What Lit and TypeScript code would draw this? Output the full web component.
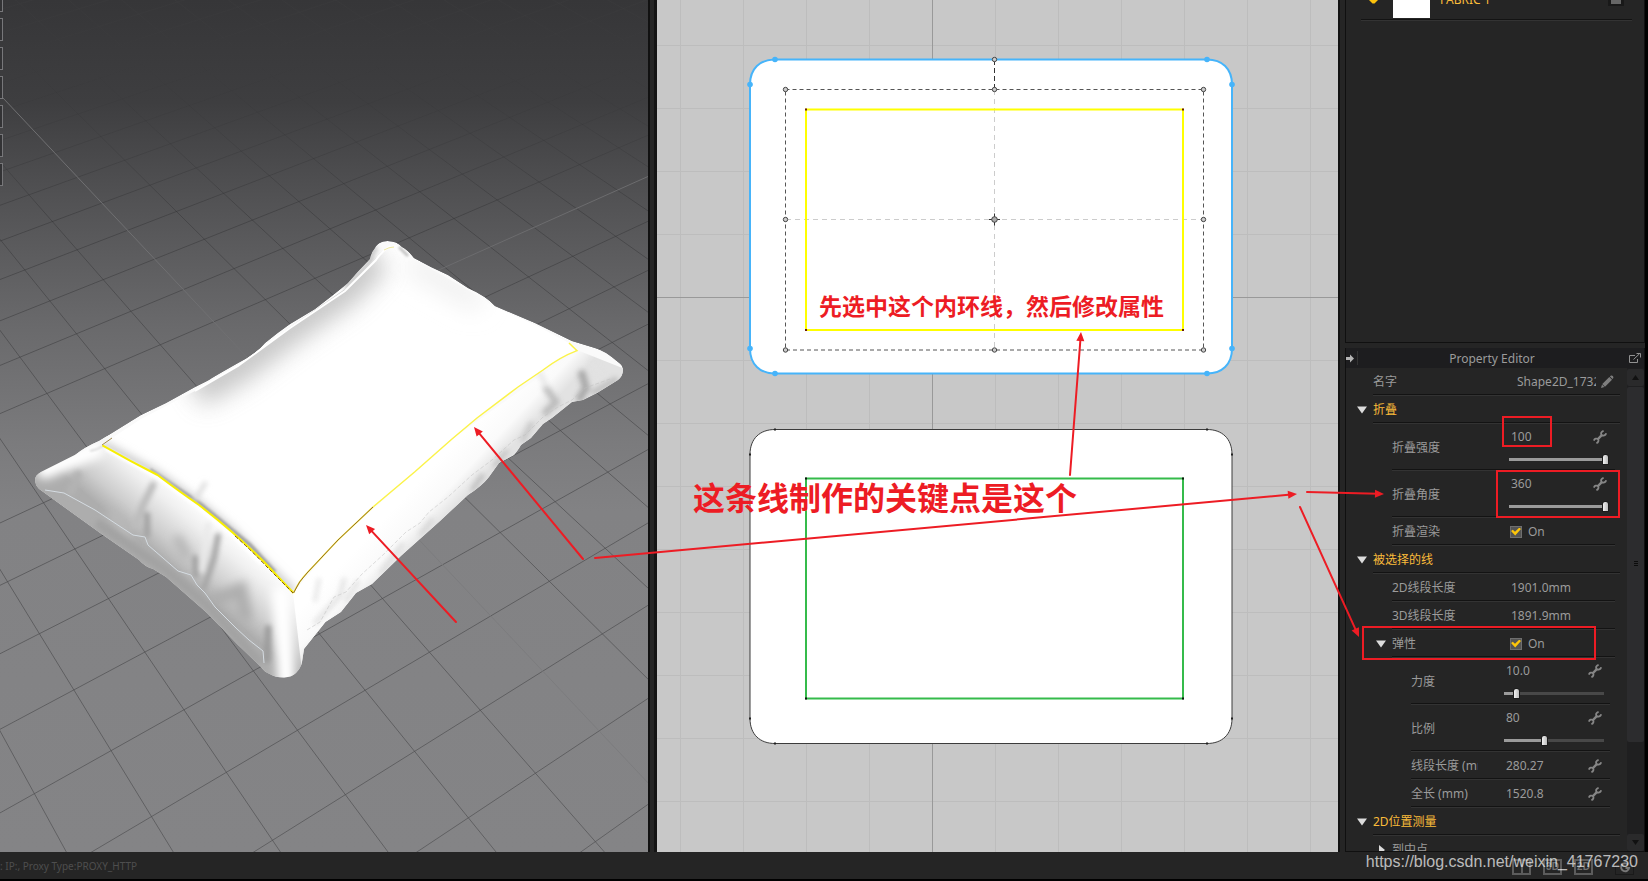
import { LitElement, html, svg, css, nothing, TemplateResult } from "lit";
import { customElement, property } from "lit/decorators.js";
import { classMap } from "lit/directives/class-map.js";

/* ---------- 3D viewport ---------- */

type Point = [number, number];

/** Projects a floor tile corner (i, j) onto the viewport. */
const project = (i: number, j: number): Point => {
  const w = 1 + 0.02588 * i - 0.0417 * j;
  return [
    (226.4 + 78.8 * i + 34.76 * j) / w,
    (772.3 - 23.15 * i + 32.95 * j) / w,
  ];
};

const floorPath = (a: Point, b: Point) =>
  `M${a[0].toFixed(1)} ${a[1].toFixed(1)}L${b[0].toFixed(1)} ${b[1].toFixed(1)}`;

const range = (from: number, to: number) =>
  Array.from({ length: to - from + 1 }, (_, k) => from + k);

const AXIS_I = 4;
const AXIS_J = -6;

const floorLines = [
  ...range(-12, 44)
    .filter((i) => i !== AXIS_I)
    .map((i) => floorPath(project(i, -34), project(i, 6))),
  ...range(-34, 6)
    .filter((j) => j !== AXIS_J)
    .map((j) => floorPath(project(-12, j), project(50, j))),
].join("");

const OUTLINE =
  "M387.6 241C381 241 377 244 375 248Q371 253 370 259Q358 271 348 283Q332 296 315 309L290 324Q277 333 265 343Q256 354 238 363Q215 376 207 381L195 387L166 403L141 415L99 441Q85 447 75 455L41 472Q35 475 35 480Q35 485 39 489L75 515L100 533L139 560Q145 567 153 569L166 577L207 613L238 645L261 667Q264 672 269.5 674Q275 677.5 284 677.5Q292 677 296 673Q301 668 302 662L304 649L325.500 622L341 612L356 593L372 584L402 555L439 522L468 495Q482 486 489 477L499 463L514 455Q519 449 521 445L531 438L543 424L552 418L572 402L583 400L597 393L618 380Q623 376 623 370Q623 365 618 362Q604 350 595 348L572 341L535 323L495 306Q486 296 468 288L448 275L431 267L414 258Q408 250 402 247Q397 241 387.600 241Z";

const TOP_FACE =
  "M390 246Q383 249 377 256L345 289L290 327L265 346L238 366L195 391L141 419L112 438L102.400 445.300Q130 461 157.500 475Q180 492 199 505Q217 519 232 532Q250 548 265 563L293.500 593Q299 581 307 573L338 540L373 507L414.600 472L452 439L477 418L518 387L543 370Q560 357 577 350.600L569 343L535 325L495 307L468 290L414 259Q404 247 396 245Z";

const SEAM_LEFT =
  "M102.400 445.300Q130 461 157.500 475Q180 492 199 505Q217 519 232 532Q250 548 265 563L293.500 593";
const SEAM_RIGHT =
  "M293.500 593Q299 581 307 573L338 540L373 507L414.600 472L452 439L477 418L518 387L543 370Q560 357 577 350.600L569 343";

@customElement("scene-view")
export class SceneView extends LitElement {
  static styles = css`
    :host { display: block; position: relative; overflow: hidden; background: #828284; }
    svg { display: block; width: 100%; height: 100%; }
    .tools { position: absolute; left: 0; top: 0; display: flex; flex-direction: column; gap: 6px; }
    .tool { box-sizing: border-box; width: 3px; height: 23px; padding: 0; border: 1px solid #77777a; border-left: 0; background: #333335; }
    .tool:first-child { height: 12px; border-top: 0; }
  `;

  render() {
    return html`
      <svg viewBox="0 0 648 852" preserveAspectRatio="xMinYMin slice" role="img" aria-label="3D pillow">
        <defs>
          <linearGradient id="sky" x1="0" y1="0" x2="0" y2="1">
            <stop offset="0" stop-color="#363638" />
            <stop offset=".12" stop-color="#3e3e40" />
            <stop offset=".24" stop-color="#535355" />
            <stop offset=".38" stop-color="#69696b" />
            <stop offset=".52" stop-color="#7b7b7d" />
            <stop offset=".6" stop-color="#828284" />
            <stop offset="1" stop-color="#848486" />
          </linearGradient>
          <linearGradient id="fade" gradientUnits="userSpaceOnUse" x1="0" y1="0" x2="0" y2="852">
            <stop offset="0" stop-color="#505050" stop-opacity=".1" />
            <stop offset=".1" stop-color="#303032" stop-opacity=".1" />
            <stop offset=".25" stop-color="#303032" stop-opacity=".45" />
            <stop offset=".5" stop-color="#48484a" stop-opacity=".66" />
            <stop offset="1" stop-color="#505052" stop-opacity=".7" />
          </linearGradient>
          <linearGradient id="left" gradientUnits="userSpaceOnUse" x1="199" y1="508" x2="158" y2="556">
            <stop offset="0" stop-color="#fcfcfc" />
            <stop offset=".25" stop-color="#efefef" />
            <stop offset=".7" stop-color="#cdcdcd" />
            <stop offset="1" stop-color="#adadad" />
          </linearGradient>
          <linearGradient id="right" gradientUnits="userSpaceOnUse" x1="430" y1="470" x2="462" y2="500">
            <stop offset="0" stop-color="#fff" />
            <stop offset=".6" stop-color="#fafafa" />
            <stop offset="1" stop-color="#e2e2e2" />
          </linearGradient>
          <filter id="b1" filterUnits="userSpaceOnUse" x="0" y="200" width="648" height="520"><feGaussianBlur stdDeviation="1.300" /></filter>
          <filter id="b2" filterUnits="userSpaceOnUse" x="0" y="200" width="648" height="520"><feGaussianBlur stdDeviation="2.500" /></filter>
          <filter id="b5" filterUnits="userSpaceOnUse" x="0" y="200" width="648" height="520"><feGaussianBlur stdDeviation="5" /></filter>
          <filter id="b12" filterUnits="userSpaceOnUse" x="0" y="200" width="648" height="520"><feGaussianBlur stdDeviation="12" /></filter>
          <clipPath id="body"><path d=${OUTLINE} /></clipPath>
          <clipPath id="face"><path d=${TOP_FACE} /></clipPath>
        </defs>

        <rect width="648" height="852" fill="url(#sky)" />
        <path d=${floorLines} fill="none" stroke="url(#fade)" />
        <path d=${floorPath(project(AXIS_I, -16), project(AXIS_I, -6))} stroke="#707072" />
        <path d=${floorPath(project(AXIS_I, -6), project(AXIS_I, 6))} stroke="#7c7c7e" />
        <path d=${floorPath(project(4, AXIS_J), project(50, AXIS_J))} stroke="#6c6c6e" />

        <g clip-path="url(#body)">
          <path d=${OUTLINE} fill="#fafafa" />
          <path d="M110 435L80 445L30 470L40 500L150 580L255 680L310 680L293 593L232 532L157 475Z" fill="url(#left)" />
          <path d="M293 593L303 680L330 625L460 510L560 420L640 375L577 350L452 439L338 540Z" fill="url(#right)" />
          <g fill="none" stroke-linecap="round">
            <g filter="url(#b5)">
              <path d="M45 470L95 450" stroke="#fff" stroke-width="18" />
              <path d="M245 615L240 590L215 600" stroke="#aeaeae" stroke-width="14" />
              <path d="M112 515L128 535" stroke="#bbb" stroke-width="10" />
              <path d="M178 540L186 555" stroke="#b5b5b5" stroke-width="10" />
              <path d="M281 595L284 640L287 690" stroke="#fff" stroke-width="18" />
            </g>
            <g filter="url(#b2)">
              <path d="M78 475L71 492" stroke="#b3b3b3" stroke-width="8" />
              <path d="M153 485L143 505L135 525" stroke="#bcbcbc" stroke-width="7" />
              <path d="M147 515L147 535" stroke="#a2a2a2" stroke-width="6" />
              <path d="M218 536L214 558L204 588" stroke="#a6a6a6" stroke-width="6" />
              <path d="M208 525L202 570" stroke="#eaeaea" stroke-width="6" />
              <path d="M195 558L196 575" stroke="#a0a0a0" stroke-width="6" />
              <path d="M268 628L267 660" stroke="#999" stroke-width="6" />
              <path d="M100 525L139 552L166 570L207 605L238 638L257 660" stroke="#a3a3a3" stroke-width="10" />
            </g>
            <g filter="url(#b2)" opacity=".75">
              <path d="M315 600L319 580" stroke="#ddd" stroke-width="4" />
              <path d="M316 622L340 596L344 580" stroke="#ddd" stroke-width="5" />
              <path d="M346 600L358 582" stroke="#d6d6d6" stroke-width="4" />
              <path d="M382 572L402 545" stroke="#d8d8d8" stroke-width="5" />
              <path d="M421 534L432 520" stroke="#cacaca" stroke-width="4" />
              <path d="M473 489L482 476" stroke="#b6b6b6" stroke-width="5" />
              <path d="M495 465L506 452" stroke="#bbb" stroke-width="5" />
              <path d="M523 440L531 424" stroke="#bdbdbd" stroke-width="5" />
              <path d="M546 412L556 402L546 388" stroke="#b0b0b0" stroke-width="7" />
              <path d="M580 398L586 388L582 374" stroke="#9a9a9a" stroke-width="8" />
              <path d="M594 392L615 380" stroke="#b4b4b4" stroke-width="6" />
              <path d="M546 385L540 374" stroke="#e2e2e2" stroke-width="5" />
              <path d="M600 374L592 362" stroke="#e2e2e2" stroke-width="5" />
            </g>
          </g>
          <path d="M376 247Q369 254 371 262L345 288" fill="none" stroke="#c8c8c8" stroke-width="7" filter="url(#b2)" />
          <path d=${TOP_FACE} fill="#fff" />
          <g clip-path="url(#face)" fill="none">
            <path d="M376 256L345 289L290 327L238 366L195 391" stroke="#a2a2a2" stroke-width="34" filter="url(#b12)" opacity=".62" />
            <path d="M410 262L480 302" stroke="#eee" stroke-width="20" filter="url(#b12)" />
            <path d="M102 445L157 475L199 505L232 532L293 593" stroke="#c0c0c0" stroke-width="8" filter="url(#b5)" />
            <path d="M150 470L199 503L250 545L275 572" stroke="#8c8c8c" stroke-width="4" filter="url(#b1)" opacity=".7" />
            <path d="M195 500L206 482" stroke="#e0e0e0" stroke-width="5" filter="url(#b2)" />
          </g>
          <g fill="none">
            <path d="M106 449L157 477L199 508L232 535L262 564" stroke="#fff" stroke-width="4" filter="url(#b1)" />
            <path d="M390 246Q381 252 376 260L345 291L290 328L238 366L195 391" stroke="#fff" stroke-width="2" />
            <path d="M399 247L408 256" stroke="#c4c4c4" stroke-width="3" filter="url(#b1)" />
            <path d="M90 451Q97 450 103 446" stroke="#bbb" filter="url(#b1)" />
          </g>
        </g>

        <path d="M45 490L64 493L95 510L133 535L145 537L148 545L178 571L191 575L197 585L205 593L215 607L236 628L249 640L263 651L264 663" fill="none" stroke="#d5dce2" />
        <path d="M307 630L320 622L334 597L346 592L362 574L384 554L406 532L420 523L429 512L448 497L472 475L492 460L514 440L525 435L543 417L558 407L572 400L585 388L610 379" fill="none" stroke="#bdbdbd" opacity=".5" stroke-dasharray="4 2" />
        <path d=${SEAM_LEFT} fill="none" stroke="#f7ee00" stroke-width="2" />
        <path d="M235 536Q252 551 266 566L293 593" fill="none" stroke="#7d5518" stroke-dasharray="4 2" />
        <path d="M102 445L112 438" fill="none" stroke="#a08a50" />
        <path d=${SEAM_RIGHT} fill="none" stroke="#fbf34a" stroke-width="1.500" />
        <path d="M293.500 593Q299 581 307 573L338 540L373 507" fill="none" stroke="#93692c" />
        <path d="M384 250Q389 247 394 247" fill="none" stroke="#efe9a0" />
      </svg>
      <div class="tools">
        ${range(1, 7).map((n) => html`<button class="tool" type="button" aria-label="Tool ${n}"></button>`)}
      </div>
    `;
  }
}

/* ---------- 2D pattern window ---------- */

const roundedPiece = (top: number, bottom: number) =>
  `M118 ${top}H550C565 ${top} 575 ${top + 9} 575 ${top + 25}V${bottom - 25}C575 ${bottom - 9} 565 ${bottom} 550 ${bottom}H118C103 ${bottom} 93 ${bottom - 9} 93 ${bottom - 25}V${top + 25}C93 ${top + 9} 103 ${top} 118 ${top}Z`;

const pieceNodes = (top: number, bottom: number): Point[] => [
  [118, top], [550, top], [575, top + 25], [575, bottom - 25],
  [550, bottom], [118, bottom], [93, bottom - 25], [93, top + 25],
];

@customElement("pattern-view")
export class PatternView extends LitElement {
  static styles = css`
    :host { display: block; overflow: hidden; background: #c8c8c8; }
    svg { display: block; width: 100%; height: 100%; }
  `;

  private dots(points: Point[], size: number, color: string) {
    return points.map(([x, y]) => svg`<rect x=${x - size / 2} y=${y - size / 2} width=${size} height=${size} fill=${color} />`);
  }

  render() {
    const columns = range(-4, 6).map((n) => 275.5 + n * 63);
    const rows = range(-4, 8).map((n) => 297.5 + n * 63);
    const handles: Point[] = [
      [337.5, 59.5], [128.5, 89.5], [337.5, 89.5], [546.5, 89.5], [128.5, 219.5],
      [546.5, 219.5], [128.5, 350], [337.5, 350], [546.5, 350],
    ];
    return html`
      <svg viewBox="0 0 681 852" preserveAspectRatio="xMinYMin slice" role="img" aria-label="2D pattern">
        <path d=${columns.map((x) => `M${x} 0V852`).join("") + rows.map((y) => `M0 ${y}H681`).join("")} stroke="#bdbdbd" />
        <path d="M275.500 0V852M0 297.500H681" stroke="#999" />

        <path d=${roundedPiece(59.5, 373.5)} fill="#fff" stroke="#46b4fa" stroke-width="2" />
        ${pieceNodes(59.5, 373.5).map(([x, y]) => svg`<circle cx=${x} cy=${y} r="2.800" fill="#46b4fa" />`)}
        <path d="M129 219.500H546M337.500 90V350" stroke="#ccc" stroke-dasharray="5 4" />
        <rect x="149" y="109.500" width="377" height="220.500" fill="none" stroke="#ff0" stroke-width="2" />
        <rect x="128.500" y="89.500" width="418" height="260.500" fill="none" stroke="#555" stroke-dasharray="4 3" />
        <path d="M337.500 60V90" stroke="#333" stroke-dasharray="5 3" />
        ${this.dots([[149, 109.5], [526, 109.5], [149, 330], [526, 330]], 2, "#6b1c10")}
        ${handles.map(([x, y]) => svg`<circle cx=${x} cy=${y} r="2.200" fill="#ccc" stroke="#444" />`)}
        <path d="M337.500 213.500V225.500M332 219.500H343" stroke="#333" />
        <circle cx="337.500" cy="219.500" r="2.800" fill="#aaa" stroke="#444" />

        <path d=${roundedPiece(429.5, 743.5)} fill="#fff" stroke="#3c3c3c" />
        ${this.dots(pieceNodes(429.5, 743.5), 2, "#222")}
        <rect x="149" y="478.500" width="377" height="220" fill="none" stroke="#35bb4b" stroke-width="2" />
        ${this.dots([[149, 478.5], [526, 478.5], [149, 698.5], [526, 698.5]], 2, "#111")}
      </svg>
    `;
  }
}

/* ---------- Property editor ---------- */

interface Row {
  id: string;
  label: string;
  level: 1 | 2 | 3;
  group?: boolean;
  open?: boolean;
  text?: string;
  field?: string;
  check?: boolean;
  slider?: { value: number; max: number };
  tool?: "wrench" | "pencil";
}

const ROWS: Row[] = [
  { id: "name", label: "名字", level: 1, field: "Shape2D_1732", tool: "pencil" },
  { id: "fold", label: "折叠", level: 1, group: true, open: true },
  { id: "strength", label: "折叠强度", level: 2, field: "100", slider: { value: 100, max: 100 }, tool: "wrench" },
  { id: "angle", label: "折叠角度", level: 2, field: "360", slider: { value: 360, max: 360 }, tool: "wrench" },
  { id: "render", label: "折叠渲染", level: 2, check: true },
  { id: "selected", label: "被选择的线", level: 1, group: true, open: true },
  { id: "len2d", label: "2D线段长度", level: 2, text: "1901.0mm" },
  { id: "len3d", label: "3D线段长度", level: 2, text: "1891.9mm" },
  { id: "elastic", label: "弹性", level: 2, open: true, check: true },
  { id: "force", label: "力度", level: 3, field: "10.0", slider: { value: 10, max: 100 }, tool: "wrench" },
  { id: "ratio", label: "比例", level: 3, field: "80", slider: { value: 80, max: 200 }, tool: "wrench" },
  { id: "segment", label: "线段长度 (mm)", level: 3, field: "280.27", tool: "wrench" },
  { id: "total", label: "全长 (mm)", level: 3, field: "1520.8", tool: "wrench" },
  { id: "measure", label: "2D位置测量", level: 1, group: true, open: true },
  { id: "midpoint", label: "到中点", level: 2, open: false },
];

const ICONS: Record<string, TemplateResult> = {
  wrench: html`<svg width="14" height="14" viewBox="0 0 14 14" fill="none" stroke="#868686" aria-hidden="true">
    <path d="M4.500 9.500L9 4.800" stroke-width="2.400" />
    <path d="M10.600 .8C8.200 1.600 7.400 3.700 8.800 5C10.200 6.200 12.400 5.600 13.200 3.300" stroke-width="1.800" />
    <path d="M.8 10.600C1.600 8.600 3.700 8 4.900 9.200C6 10.400 5.400 12.400 3.400 13.200" stroke-width="1.800" />
  </svg>`,
  pencil: html`<svg width="14" height="14" viewBox="0 0 14 14" aria-hidden="true">
    <path d="M1 13L2 9.500L4.500 12ZM2.300 9L9.300 2L12 4.700L5 11.700ZM9.900 1.500L11 .6Q12 .2 12.800 1Q13.700 2 13.300 2.900L12.500 4.100Z" fill="#7e7e7e" />
  </svg>`,
};

@customElement("property-editor")
export class PropertyEditor extends LitElement {
  @property({ attribute: false }) rows: Row[] = ROWS;

  static styles = css`
    :host { display: flex; flex-direction: column; min-height: 0; font: 12px/16px "Noto Sans", "Noto Sans CJK SC", sans-serif; color: #9b9b9b; }
    button { display: flex; align-items: center; justify-content: center; flex: none; padding: 0; border: 0; background: none; color: inherit; }
    .title { display: flex; align-items: center; flex: none; height: 20px; background: #1d1d1f; }
    .title h2 { flex: 1; margin: 0; padding-top: 2px; font-size: 12px; font-weight: 400; text-align: center; }
    .dock { width: 12px; height: 14px; border-right: 1px solid #333; justify-content: flex-start; }
    .popup { width: 18px; height: 18px; }
    .content { display: flex; flex: 1; min-height: 0; }
    .rows { flex: 1; min-width: 0; overflow: hidden; }
    .row { display: flex; height: 28px; }
    .row.tall { height: 47px; }
    .gutter { box-sizing: border-box; display: flex; align-items: center; justify-content: flex-end; flex: none; width: 27px; padding-right: 6px; }
    .cell { box-sizing: border-box; display: flex; align-items: center; flex: 1; min-width: 0; margin-right: 7px; border-bottom: 1px solid #333; box-shadow: inset 0 -1px #131313; }
    .l2 .gutter { width: 46px; }
    .l2 .cell { margin-right: 12px; }
    .l3 .gutter { width: 65px; }
    .l3 .cell { margin-right: 17px; }
    .label { flex: 1; min-width: 0; overflow: hidden; white-space: nowrap; }
    .tall .label { padding-top: 2px; }
    .l3 .label { flex: none; width: 67px; margin-right: auto; }
    .head .label { color: #fbbc3a; }
    .value { display: flex; flex-direction: column; flex: none; width: 106px; }
    .line { display: flex; align-items: center; gap: 4px; height: 18px; padding: 0 8px 0 2px; }
    .l1 .line { padding-left: 3px; padding-right: 6px; }
    input.field { flex: 1; min-width: 0; padding: 0; border: 0; outline: 0; background: none; font: inherit; color: inherit; }
    .check { gap: 6px; padding-left: 1px; }
    input.box { appearance: none; display: grid; place-items: center; flex: none; box-sizing: border-box; width: 12px; height: 12px; margin: 0; border: 1px solid #6f6f6f; background: #555; }
    input.box:checked::before { content: ""; width: 10px; height: 8px; background: #fdc60a; clip-path: polygon(0 45%, 18% 28%, 40% 52%, 84% 0, 100% 18%, 42% 100%); }
    input.slider { appearance: none; width: 100px; height: 14px; margin: 6px 0 0; background: none; }
    input.slider::-webkit-slider-runnable-track { height: 3px; background: linear-gradient(90deg, #9b9b9b var(--fill), #484848 var(--fill)); }
    input.slider::-webkit-slider-thumb { appearance: none; width: 7px; height: 11px; margin-top: -4px; background: linear-gradient(90deg, #f2f2f2, #bcbcbc); border: 1px solid #1b1b1b; border-radius: 3px 3px 0 0; }
    .scroll { display: flex; flex-direction: column; flex: none; width: 17px; padding-top: 1px; background: #1f1f20; }
    .scroll button { height: 17px; border-radius: 2px; background: #2a2a2b; }
    .thumb { display: flex; align-items: center; justify-content: center; flex: 357; margin: 1px 0; border-radius: 2px; background: #2c2c2e; }
    .track { flex: 92; }
    .grip { width: 4px; height: 6px; background: repeating-linear-gradient(#0c0c0c 0 1px, #2c2c2e 1px 2px); }
  `;

  private triangle(row: Row) {
    if (row.open === undefined) return nothing;
    return html`<button type="button" aria-label=${row.label} aria-expanded=${row.open}>
      <svg width="10" height="10" viewBox="0 0 10 10" aria-hidden="true">
        <path d=${row.open ? "M0 1.500H10L5 8.500Z" : "M3 0L9 5L3 10Z"} fill="#dcdcdc" />
      </svg>
    </button>`;
  }

  private value(row: Row) {
    if (row.check) {
      return html`<div class="value"><div class="line check">
        <input class="box" id=${row.id} type="checkbox" checked /><span>On</span>
      </div></div>`;
    }
    if (row.text) return html`<div class="value"><div class="line">${row.text}</div></div>`;
    if (!row.field) return nothing;
    return html`<div class="value">
      <div class="line">
        <input class="field" id=${row.id} type="text" .value=${row.field} />
        ${row.tool ? html`<button type="button" aria-label="${row.label} ${row.tool}">${ICONS[row.tool]}</button>` : nothing}
      </div>
      ${row.slider
        ? html`<input class="slider" type="range" min="0" max=${row.slider.max} .value=${String(row.slider.value)}
            aria-label=${row.label} style="--fill:${(row.slider.value / row.slider.max) * 100}%" />`
        : nothing}
    </div>`;
  }

  render() {
    return html`
      <div class="title">
        <button class="dock" type="button" aria-label="Dock">
          <svg width="9" height="9" viewBox="0 0 9 9" aria-hidden="true"><path d="M0 3H4V.5L8 4.500L4 8.500V6H0Z" fill="#b5b5b5" /></svg>
        </button>
        <h2>Property Editor</h2>
        <button class="popup" type="button" aria-label="Pop out">
          <svg width="12" height="11" viewBox="0 0 12 11" fill="none" stroke="#929292" aria-hidden="true">
            <path d="M6 2.500H.5V9.500H8.500V6M4.500 6.500L10.500.8M7.500.5H11.500V4.500" />
          </svg>
        </button>
      </div>
      <div class="content">
        <div class="rows">
          ${this.rows.map((row) => html`
            <div class=${classMap({ row: true, tall: !!row.slider, head: !!row.group, [`l${row.level}`]: true })}>
              <div class="gutter">${this.triangle(row)}</div>
              <div class="cell">
                ${row.field || row.check
                  ? html`<label class="label" for=${row.id}>${row.label}</label>`
                  : html`<span class="label">${row.label}</span>`}
                ${this.value(row)}
              </div>
            </div>`)}
        </div>
        <div class="scroll">
          <button type="button" aria-label="Scroll up"><svg width="7" height="5" aria-hidden="true"><path d="M0 5L3.500 0L7 5Z" fill="#111" /></svg></button>
          <div class="thumb"><div class="grip"></div></div>
          <div class="track"></div>
          <button type="button" aria-label="Scroll down"><svg width="7" height="5" aria-hidden="true"><path d="M0 0L3.500 5L7 0Z" fill="#111" /></svg></button>
        </div>
      </div>
    `;
  }
}

/* ---------- Annotations ---------- */

const ARROWS: [Point, Point][] = [
  [[583, 559], [474, 427]],
  [[456, 622], [366, 525]],
  [[595, 558], [1297, 494]],
  [[1070, 475], [1081, 332]],
  [[1307, 492], [1384, 494]],
  [[1300, 507], [1359, 637]],
];

const MARKS = [
  [1503, 417, 48, 29],
  [1497, 471, 122, 46],
  [1363, 627, 232, 32],
];

@customElement("app-root")
export class AppRoot extends LitElement {
  static styles = css`
    :host { display: block; position: relative; height: 100vh; overflow: hidden; background: #252525; font-family: "Noto Sans", "Noto Sans CJK SC", sans-serif; }
    .app { display: flex; flex-direction: column; height: 100%; }
    .main { display: flex; flex: 1; min-height: 0; }
    scene-view { flex: 648; min-width: 0; border-right: 2px solid #111; }
    .divider { flex: none; width: 4px; background: #252525; }
    pattern-view { flex: 681; min-width: 0; border-left: 3px solid #141414; border-right: 2px solid #111; }
    .side { display: flex; flex-direction: column; gap: 5px; box-sizing: border-box; flex: none; width: 308px; padding-left: 5px; border-right: 3px solid #000; }
    .fabrics { box-sizing: border-box; flex: none; height: 343px; padding: 0 12px 0 15px; border: solid #101010; border-width: 0 1px 1px; overflow: hidden; }
    .fabric { display: flex; align-items: flex-start; height: 20px; border-bottom: 1px solid #333; box-shadow: inset 0 -1px #131313; color: #fbbc3a; font-size: 12px; line-height: 16px; }
    .mark { flex: none; margin-left: 8px; }
    .swatch { width: 37px; height: 18px; margin-left: 15px; background: #fff; }
    .name { flex: 1; margin: -8px 0 0 10px; }
    .fold { box-sizing: border-box; width: 16px; height: 6px; margin-right: 8px; padding: 0; border: solid #191919; border-width: 0 3px 2px; background: #666; }
    property-editor { flex: 1; border: solid #101010; border-width: 0 1px 1px; }
    .status { display: flex; align-items: center; box-sizing: border-box; flex: none; height: 29px; padding-right: 14px; border-bottom: 2px solid #000; background: #252525; color: #4e4e4e; font-size: 10px; line-height: 14px; }
    .status p { flex: 1; margin: 0; }
    .views { display: flex; align-items: center; gap: 12px; padding-top: 3px; }
    .views button { display: flex; align-items: center; justify-content: center; box-sizing: border-box; width: 19px; height: 16px; padding: 0; border: 2px solid #5c5c5c; background: none; color: #707070; font: bold 10px/12px "Liberation Sans", sans-serif; }
    .views .refresh { margin-left: 10px; border: 1px solid #1a1a1a; }
    .overlay { position: absolute; inset: 0; width: 100%; height: 100%; pointer-events: none; }
    .note { font-family: "Noto Sans CJK SC", sans-serif; font-weight: 700; fill: #ed1c24; }
    .small { font-size: 23px; }
    .big { font-size: 32px; }
    .watermark { position: absolute; right: 10px; bottom: 9px; color: rgba(255, 255, 255, 0.7); font: 16px/20px "Liberation Sans", sans-serif; text-decoration: none; }
  `;

  private arrow([from, to]: [Point, Point]) {
    const angle = (Math.atan2(to[1] - from[1], to[0] - from[0]) * 180) / Math.PI;
    const length = Math.hypot(to[0] - from[0], to[1] - from[1]);
    return svg`<g transform="translate(${from[0]} ${from[1]}) rotate(${angle.toFixed(2)})">
      <path d="M0 0H${(length - 6).toFixed(1)}" stroke="#ed1c24" stroke-width="2" stroke-linecap="round" />
      <path d="M${length.toFixed(1)} 0L${(length - 9).toFixed(1)} -4V4Z" fill="#ed1c24" />
    </g>`;
  }

  render() {
    return html`
      <div class="app">
        <div class="main">
          <scene-view></scene-view>
          <div class="divider"></div>
          <pattern-view></pattern-view>
          <div class="side">
            <section class="fabrics">
              <div class="fabric">
                <svg class="mark" width="9" height="4" aria-hidden="true"><path d="M0 0H9L5.500 3.500H3.500Z" fill="#fcc20c" /></svg>
                <div class="swatch"></div>
                <span class="name">FABRIC 1</span>
                <button class="fold" type="button" aria-label="Fabric options"></button>
              </div>
            </section>
            <property-editor></property-editor>
          </div>
        </div>
        <footer class="status">
          <p>: IP:, Proxy Type:PROXY_HTTP</p>
          <div class="views">
            <button type="button" aria-label="Split view"><svg width="2" height="12" aria-hidden="true"><path d="M1 0V12" stroke="#5c5c5c" stroke-width="2" /></svg></button>
            <button type="button">3D</button>
            <button type="button">2D</button>
            <button class="refresh" type="button" aria-label="Refresh">
              <svg width="12" height="12" viewBox="0 0 12 12" fill="none" stroke="#777" stroke-width="2" aria-hidden="true"><path d="M9 3.500A4 4 0 1 0 10 7H6.500" /></svg>
            </button>
          </div>
        </footer>
      </div>
      <svg class="overlay" aria-hidden="true">
        ${MARKS.map(([x, y, w, h]) => svg`<rect x=${x} y=${y} width=${w} height=${h} fill="none" stroke="#ed1c24" stroke-width="2" />`)}
        ${ARROWS.map((a) => this.arrow(a))}
        <text class="note small" x="819" y="315">先选中这个内环线，然后修改属性</text>
        <text class="note big" x="693" y="510">这条线制作的关键点是这个</text>
      </svg>
      <a class="watermark" href="https://blog.csdn.net/weixin_41767230">https://blog.csdn.net/weixin_41767230</a>
    `;
  }
}
